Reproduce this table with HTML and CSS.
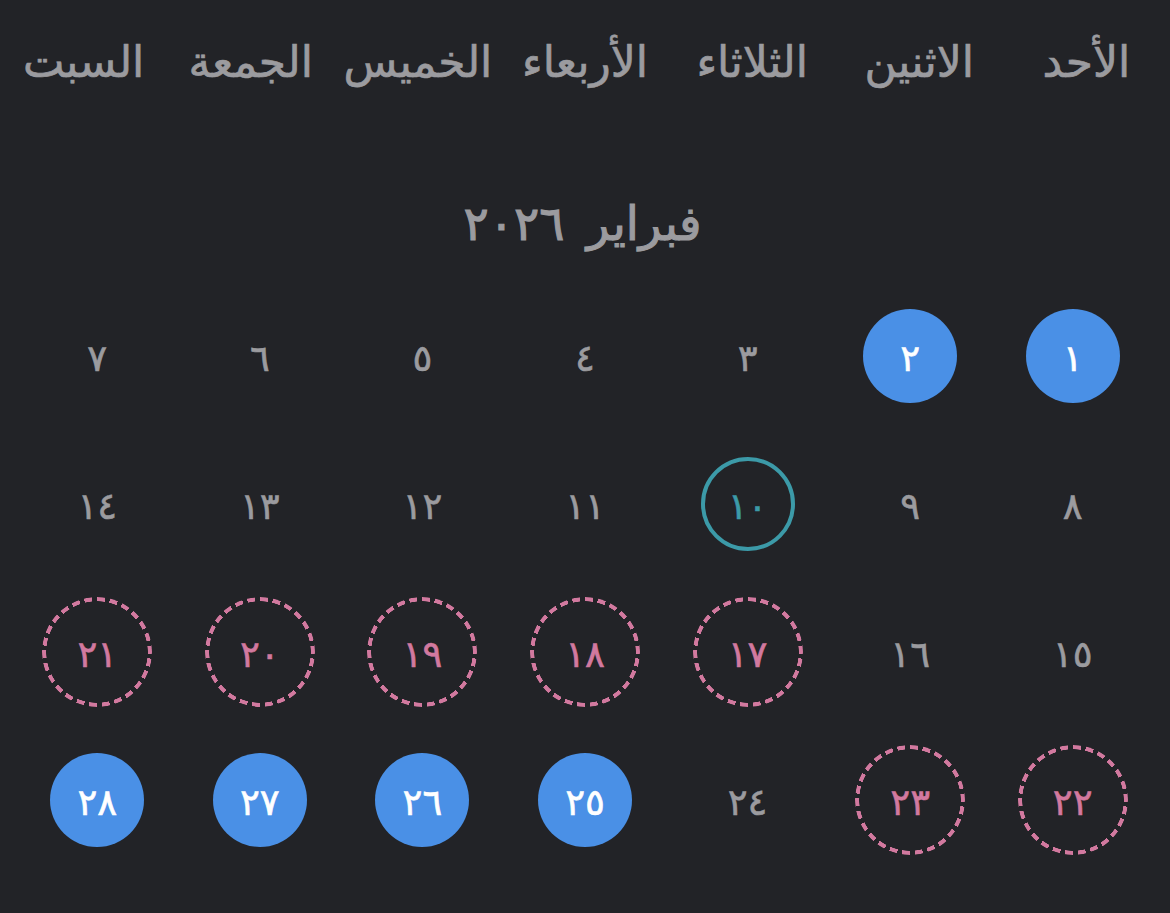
FILE: index.html
```html
<!DOCTYPE html>
<html lang="ar" dir="rtl">
<head>
<meta charset="utf-8">
<title>فبراير ٢٠٢٦</title>
<link rel="stylesheet" href="styles.css">
</head>
<body>
<main class="calendar">
  <div class="weekdays">
    <div class="wd">الأحد</div>
    <div class="wd">الاثنين</div>
    <div class="wd">الثلاثاء</div>
    <div class="wd">الأربعاء</div>
    <div class="wd">الخميس</div>
    <div class="wd">الجمعة</div>
    <div class="wd">السبت</div>
  </div>
  <h1 class="month">فبراير <span class="year">٢٠٢٦</span></h1>
  <div class="days">
    <div class="cell"><span class="day filled">١</span></div>
    <div class="cell"><span class="day filled">٢</span></div>
    <div class="cell"><span class="day">٣</span></div>
    <div class="cell"><span class="day">٤</span></div>
    <div class="cell"><span class="day">٥</span></div>
    <div class="cell"><span class="day">٦</span></div>
    <div class="cell"><span class="day">٧</span></div>

    <div class="cell"><span class="day">٨</span></div>
    <div class="cell"><span class="day">٩</span></div>
    <div class="cell"><span class="day today">١٠</span></div>
    <div class="cell"><span class="day">١١</span></div>
    <div class="cell"><span class="day">١٢</span></div>
    <div class="cell"><span class="day">١٣</span></div>
    <div class="cell"><span class="day">١٤</span></div>

    <div class="cell"><span class="day">١٥</span></div>
    <div class="cell"><span class="day">١٦</span></div>
    <div class="cell"><span class="day dashed">١٧</span></div>
    <div class="cell"><span class="day dashed">١٨</span></div>
    <div class="cell"><span class="day dashed">١٩</span></div>
    <div class="cell"><span class="day dashed">٢٠</span></div>
    <div class="cell"><span class="day dashed">٢١</span></div>

    <div class="cell"><span class="day dashed">٢٢</span></div>
    <div class="cell"><span class="day dashed">٢٣</span></div>
    <div class="cell"><span class="day">٢٤</span></div>
    <div class="cell"><span class="day filled">٢٥</span></div>
    <div class="cell"><span class="day filled">٢٦</span></div>
    <div class="cell"><span class="day filled">٢٧</span></div>
    <div class="cell"><span class="day filled">٢٨</span></div>
  </div>
</main>
</body>
</html>
```
FILE: styles.css
```css
html, body {
  margin: 0;
  padding: 0;
  background: #222327;
}
body {
  font-family: "Noto Sans", "DejaVu Sans", sans-serif;
  color: #9b9b9f;
  width: 1170px;
  height: 913px;
  overflow: hidden;
}
.calendar {
  display: flex;
  flex-direction: column;
}
.weekdays {
  display: grid;
  grid-template-columns: repeat(7, 1fr);
  padding-top: 30px;
}
.wd {
  text-align: center;
  font-size: 44px;
  line-height: 60px;
  font-weight: 400;
  -webkit-text-stroke: 0.7px currentColor;
}
.month {
  margin: 102px 0 0;
  text-align: center;
  font-size: 47px;
  line-height: 60px;
  font-weight: 400;
  word-spacing: 10px;
  color: #9b9b9f;
  -webkit-text-stroke: 1.1px currentColor;
}
.year {
  letter-spacing: 5px;
  margin-left: -5px;
}
.days {
  display: grid;
  grid-template-columns: repeat(7, 1fr);
  grid-auto-rows: 148px;
  padding: 0 16px;
  margin-top: 30px;
}
.cell {
  display: flex;
  align-items: center;
  justify-content: center;
}
.day {
  position: relative;
  width: 94px;
  height: 94px;
  border-radius: 50%;
  display: flex;
  align-items: center;
  justify-content: center;
  font-size: 37px;
  font-weight: 400;
  letter-spacing: 3px;
  -webkit-text-stroke: 0.6px currentColor;
  box-sizing: border-box;
}
.filled {
  background: #4a90e6;
  color: #ffffff;
}
.today {
  border: 4px solid #3c9aa8;
  color: #3c9aa8;
}
.dashed {
  width: 110px;
  height: 110px;
  color: #d2799f;
}
.dashed::before {
  content: "";
  position: absolute;
  inset: 0;
  border-radius: 50%;
  background: repeating-conic-gradient(#d2799f 0deg 8.6deg, transparent 8.6deg 13.85deg);
  -webkit-mask: radial-gradient(farthest-side, transparent calc(100% - 4.5px), #000 calc(100% - 4px));
  mask: radial-gradient(farthest-side, transparent calc(100% - 4.5px), #000 calc(100% - 4px));
}
```
